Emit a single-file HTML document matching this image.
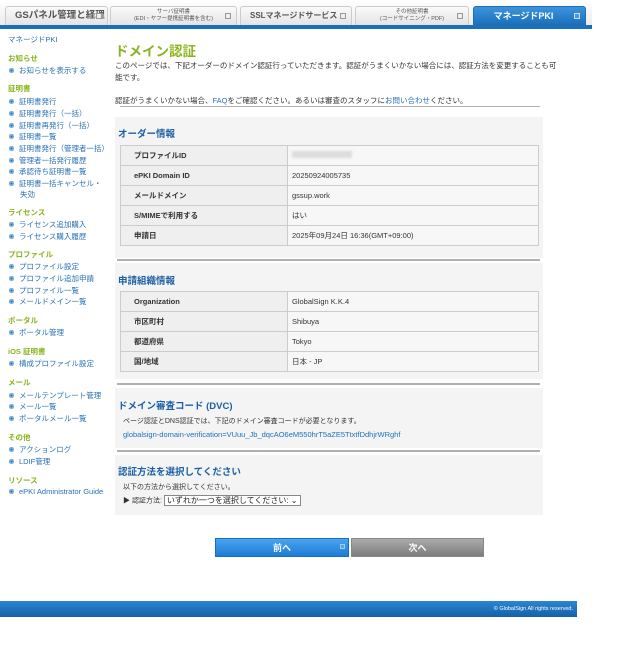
<!DOCTYPE html>
<html><head><meta charset="utf-8"><style>
*{margin:0;padding:0;box-sizing:border-box}
body{width:618px;height:653px;background:#fff;font-family:"Liberation Sans","Noto Sans CJK JP",sans-serif;position:relative;overflow:hidden;color:#333}
.a{position:absolute;white-space:nowrap}
.topbg{position:absolute;left:0;top:0;width:592px;height:25px;background:linear-gradient(#fff,#ececec);border-radius:6px 6px 0 0}
.tab{position:absolute;top:6px;height:19px;background:linear-gradient(#fafafa,#e4e4e4);border:1px solid #ccc;border-bottom:none;border-radius:3px 3px 0 0;font-size:8.5px;font-weight:bold;color:#555;text-align:center;white-space:nowrap;overflow:hidden}
.tab .i{position:absolute;right:5px;top:6px;width:6px;height:6px;border:1px solid #999;background:#eee}
.tab.sm{font-size:5.5px;line-height:7px;padding-top:2px;font-weight:normal}
.bar{position:absolute;left:0;top:25px;width:592px;height:4px;background:#1b6fb9}
.sb{font-size:7.5px;color:#2a72b5}
.sh{font-size:7.5px;color:#8ab41e;font-weight:bold}
.li::before{content:"";display:inline-block;width:5px;height:5px;border-radius:50%;background:#2a72b5;margin-right:5px;vertical-align:0;box-shadow:inset 0 0 0 1.5px #7fb3e0}
.p{font-size:7.5px;color:#333}
.box{position:absolute;left:115px;width:428px;background:#f4f4f4}
.hr{position:absolute;left:117px;width:423px;height:2px;background:#b0b0b0}
.h3{font-size:9.5px;color:#1d5fa5;font-weight:bold}
table{position:absolute;border-collapse:collapse;font-size:7.5px}
td{border:1px solid #ccc;height:20px;padding-left:13px;background:#f7f7f7}
td.l{background:#efefef;font-weight:bold;color:#333;width:167px}
td.v{padding-left:4px;color:#333}
</style></head><body>
<div class="topbg"></div>
<div class="tab" style="left:5px;width:103px;font-size:9.5px;line-height:18px;text-align:left;padding-left:9px">GSパネル管理と経理<span class="i"></span></div>
<div class="tab sm" style="left:110px;width:127px">サーバ証明書<br>(EDI・ヤフー提携証明書を含む)<span class="i"></span></div>
<div class="tab" style="left:240px;width:112px;line-height:18px;text-align:left;padding-left:9px;font-size:8px">SSLマネージドサービス<span class="i"></span></div>
<div class="tab sm" style="left:355px;width:114px">その他証明書<br>(コードサイニング・PDF)<span class="i"></span></div>
<div class="tab" style="left:473px;width:113px;background:linear-gradient(#3d93dd,#1b6fb9);border-color:#1b6fb9;color:#fff;line-height:18px;font-size:9px;padding-right:12px">マネージドPKI<span class="i" style="border-color:#cde;background:#4a9ae0"></span></div>
<div class="bar"></div>

<div class="a sb" style="left:8px;top:34px">マネージドPKI</div>
<div class="a sh" style="left:8px;top:53px">お知らせ</div>
<div class="a sb li" style="left:9px;top:65px">お知らせを表示する</div>
<div class="a sh" style="left:8px;top:83px">証明書</div>
<div class="a sb li" style="left:9px;top:96px">証明書発行</div>
<div class="a sb li" style="left:9px;top:108px">証明書発行（一括）</div>
<div class="a sb li" style="left:9px;top:120px">証明書再発行（一括）</div>
<div class="a sb li" style="left:9px;top:131px">証明書一覧</div>
<div class="a sb li" style="left:9px;top:143px">証明書発行（管理者一括）</div>
<div class="a sb li" style="left:9px;top:155px">管理者一括発行履歴</div>
<div class="a sb li" style="left:9px;top:166px">承認待ち証明書一覧</div>
<div class="a sb li" style="left:9px;top:178px">証明書一括キャンセル・</div>
<div class="a sb" style="left:20px;top:189px">失効</div>
<div class="a sh" style="left:8px;top:207px">ライセンス</div>
<div class="a sb li" style="left:9px;top:219px">ライセンス追加購入</div>
<div class="a sb li" style="left:9px;top:231px">ライセンス購入履歴</div>
<div class="a sh" style="left:8px;top:249px">プロファイル</div>
<div class="a sb li" style="left:9px;top:261px">プロファイル設定</div>
<div class="a sb li" style="left:9px;top:273px">プロファイル追加申請</div>
<div class="a sb li" style="left:9px;top:285px">プロファイル一覧</div>
<div class="a sb li" style="left:9px;top:296px">メールドメイン一覧</div>
<div class="a sh" style="left:8px;top:315px">ポータル</div>
<div class="a sb li" style="left:9px;top:327px">ポータル管理</div>
<div class="a sh" style="left:8px;top:346px">iOS 証明書</div>
<div class="a sb li" style="left:9px;top:358px">構成プロファイル設定</div>
<div class="a sh" style="left:8px;top:377px">メール</div>
<div class="a sb li" style="left:9px;top:390px">メールテンプレート管理</div>
<div class="a sb li" style="left:9px;top:401px">メール一覧</div>
<div class="a sb li" style="left:9px;top:413px">ポータルメール一覧</div>
<div class="a sh" style="left:8px;top:432px">その他</div>
<div class="a sb li" style="left:9px;top:444px">アクションログ</div>
<div class="a sb li" style="left:9px;top:456px">LDIF管理</div>
<div class="a sh" style="left:8px;top:475px">リソース</div>
<div class="a sb li" style="left:9px;top:487px">ePKI Administrator Guide</div>

<div class="a" style="left:115px;top:40px;font-size:13.5px;font-weight:bold;color:#8ab41e">ドメイン認証</div>
<div class="a p" style="left:115px;top:60px">このページでは、下記オーダーのドメイン認証行っていただきます。認証がうまくいかない場合には、認証方法を変更することも可</div>
<div class="a p" style="left:115px;top:72px">能です。</div>
<div class="a p" style="left:115px;top:95px">認証がうまくいかない場合、<span style="color:#2a72b5">FAQ</span>をご確認ください。あるいは審査のスタッフに<span style="color:#2a72b5">お問い合わせ</span>ください。</div>
<div class="hr" style="top:106px;left:120px;width:420px;height:1px"></div>

<div class="box" style="top:117px;height:141px"></div>
<div class="a h3" style="left:118px;top:126px">オーダー情報</div>
<table style="left:120px;top:145px;width:419px">
<tr><td class="l">プロファイルID</td><td class="v"><span style="display:inline-block;width:60px;height:7px;background:#ddd;filter:blur(1px)"></span></td></tr>
<tr><td class="l">ePKI Domain ID</td><td class="v">20250924005735</td></tr>
<tr><td class="l">メールドメイン</td><td class="v">gssup.work</td></tr>
<tr><td class="l">S/MIMEで利用する</td><td class="v">はい</td></tr>
<tr><td class="l">申請日</td><td class="v">2025年09月24日 16:36(GMT+09:00)</td></tr>
</table>
<div class="hr" style="top:259px"></div>

<div class="box" style="top:263px;height:116px"></div>
<div class="a h3" style="left:118px;top:273px">申請組織情報</div>
<table style="left:120px;top:291px;width:419px">
<tr><td class="l">Organization</td><td class="v">GlobalSign K.K.4</td></tr>
<tr><td class="l">市区町村</td><td class="v">Shibuya</td></tr>
<tr><td class="l">都道府県</td><td class="v">Tokyo</td></tr>
<tr><td class="l">国/地域</td><td class="v">日本 - JP</td></tr>
</table>
<div class="hr" style="top:383px"></div>

<div class="box" style="top:388px;height:60px"></div>
<div class="a h3" style="left:118px;top:398px">ドメイン審査コード (DVC)</div>
<div class="a p" style="left:123px;top:416px;font-size:7px">ページ認証とDNS認証では、下記のドメイン審査コードが必要となります。</div>
<div class="a" style="left:123px;top:430px;font-size:7.5px;color:#1d72c0">globalsign-domain-verification=VUuu_Jb_dqcAO6eM550hrT5aZE5TtxtfDdhjrWRghf</div>
<div class="hr" style="top:450px"></div>

<div class="box" style="top:455px;height:60px"></div>
<div class="a h3" style="left:118px;top:464px">認証方法を選択してください</div>
<div class="a p" style="left:123px;top:482px;font-size:7px">以下の方法から選択してください。</div>
<div class="a p" style="left:123px;top:495px;font-size:7px">▶ 認証方法: <span style="display:inline-block;border:1px solid #888;background:#fff;padding:0 2px;font-size:8px;color:#222;height:11px;line-height:10px;vertical-align:middle">いずれか一つを選択してください: ⌄</span></div>

<div class="a" style="left:215px;top:538px;width:134px;height:19px;background:linear-gradient(#4aa4f0,#1c7bd4);border:1px solid #1a6fb9;color:#fff;font-size:9px;font-weight:bold;text-align:center;line-height:18px">前へ<span style="position:absolute;right:3px;top:5px;width:5px;height:5px;border:1px solid #9cf;background:#5ab"></span></div>
<div class="a" style="left:351px;top:538px;width:133px;height:19px;background:linear-gradient(#aaa,#7d7d7d);border:1px solid #888;color:#fff;font-size:9px;font-weight:bold;text-align:center;line-height:18px">次へ</div>

<div class="a" style="left:0;top:601px;width:577px;height:16px;background:linear-gradient(#2a86d3,#1560a8);color:#fff;font-size:5.5px;text-align:right;padding-right:4px;line-height:16px">© GlobalSign All rights reserved.</div>
</body></html>
